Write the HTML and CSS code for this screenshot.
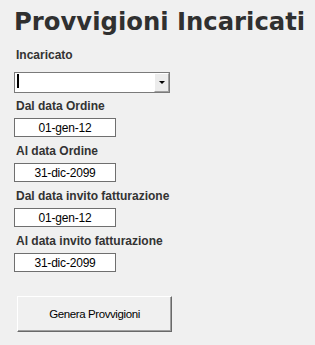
FILE: index.html
```html
<!DOCTYPE html>
<html lang="it">
<head>
    <meta charset="UTF-8">
    <meta name="viewport" content="width=device-width, initial-scale=1.0">
    <title>Provvigioni Incaricati</title>
    <link rel="stylesheet" href="styles.css">
</head>
<body>
    <div class="maschera">
        <h1 class="titolo">Provvigioni Incaricati</h1>

        <label class="etichetta etichetta-prima" for="incaricato">Incaricato</label>
        <div class="combo">
            <span class="cursore"></span>
            <input type="text" id="incaricato" class="combo-testo">
            <span class="combo-freccia"><span class="triangolo"></span></span>
        </div>

        <label class="etichetta etichetta-combo" for="dal-ordine">Dal data Ordine</label>
        <input type="text" id="dal-ordine" class="casella" value="01-gen-12" readonly>

        <label class="etichetta" for="al-ordine">Al data Ordine</label>
        <input type="text" id="al-ordine" class="casella" value="31-dic-2099" readonly>

        <label class="etichetta" for="dal-invito">Dal data invito fatturazione</label>
        <input type="text" id="dal-invito" class="casella" value="01-gen-12" readonly>

        <label class="etichetta" for="al-invito">Al data invito fatturazione</label>
        <input type="text" id="al-invito" class="casella" value="31-dic-2099" readonly>

        <button type="button" class="pulsante">Genera Provvigioni</button>
    </div>
</body>
</html>
```

FILE: styles.css
```css
/* Base */
body, html {
    margin: 0;
    padding: 0;
    background-color: #f0f0f0;
    font-family: "Liberation Sans", Arial, sans-serif;
}

.maschera {
    display: flex;
    flex-direction: column;
    align-items: flex-start;
    padding: 8px 0 0 14px;
}

.titolo {
    margin: 0;
    font-family: "DejaVu Sans", Verdana, sans-serif;
    font-weight: bold;
    font-size: 24.3px;
    line-height: 28px;
    color: #303030;
    white-space: nowrap;
}

/* Etichette */
.etichetta {
    display: block;
    margin: 7px 0 0 2px;
    font-weight: bold;
    font-size: 12px;
    line-height: 14px;
    color: #333;
}

.etichetta-prima {
    margin-top: 12px;
}

.etichetta-combo {
    margin-top: 6px;
}

/* Combo incaricato */
.combo {
    position: relative;
    display: flex;
    margin-top: 10px;
    width: 156px;
    height: 21px;
    box-sizing: border-box;
    border: 1px solid #7a7a7a;
    background-color: #ffffff;
}

.combo-testo {
    flex: 1;
    min-width: 0;
    border: none;
    outline: none;
    padding: 0;
    background: transparent;
}

.cursore {
    position: absolute;
    left: 2px;
    top: 1px;
    width: 2px;
    height: 14px;
    background-color: #000;
}

.combo-freccia {
    display: flex;
    align-items: center;
    justify-content: center;
    width: 15px;
    box-sizing: border-box;
    border-left: 1px solid #fff;
    border-top: 1px solid #fff;
    border-right: 1px solid #a0a0a0;
    border-bottom: 1px solid #a0a0a0;
    background-color: #ececec;
}

.triangolo {
    width: 0;
    height: 0;
    border-left: 3px solid transparent;
    border-right: 3px solid transparent;
    border-top: 3px solid #000;
}

/* Caselle data */
.casella {
    margin-top: 5px;
    width: 102px;
    height: 19px;
    box-sizing: border-box;
    padding: 0;
    border: 1px solid #6f6f6f;
    background-color: #ffffff;
    font-family: "Liberation Sans", Arial, sans-serif;
    font-size: 12px;
    letter-spacing: -0.2px;
    color: #000;
    text-align: center;
    outline: none;
}

/* Pulsante */
.pulsante {
    margin: 24px 0 0 3px;
    width: 155px;
    height: 36px;
    padding: 0;
    border-top: 1px solid #fff;
    border-left: 1px solid #fff;
    border-right: 1px solid #696969;
    border-bottom: 1px solid #696969;
    box-shadow: inset -1px -1px 0 #a0a0a0;
    background-color: #f0f0f0;
    font-family: "Liberation Sans", Arial, sans-serif;
    font-size: 11.5px;
    letter-spacing: -0.4px;
    color: #000;
    cursor: pointer;
}
```
